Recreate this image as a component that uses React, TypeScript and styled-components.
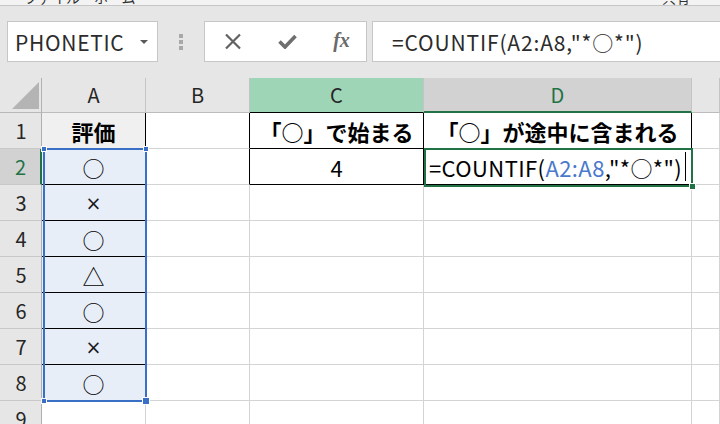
import React from 'react';
import styled, { createGlobalStyle } from 'styled-components';

const GlobalStyle = createGlobalStyle`
  html, body { margin: 0; padding: 0; background: #ffffff; }
  body { font-family: "Noto Sans CJK JP", "Noto Sans", sans-serif; }
`;

const JP = '"Noto Sans CJK JP", "Noto Sans", sans-serif';

// Shell
const Page = styled.div`
  width: 720px;
  height: 424px;
  overflow: hidden;
  display: flex;
  flex-direction: column;
  background: #e6e6e6;
`;

const TopStrip = styled.div`
  height: 5px;
  flex-shrink: 0;
  overflow: hidden;
  background: #f3f3f3;
  border-bottom: 1px solid #c6c6c6;
  display: flex;
  justify-content: space-between;
  padding: 0 30px 0 24px;
  font-family: ${JP};
  font-size: 14px;
  line-height: 14px;
  color: #333;
`;

const StripText = styled.span`
  margin-top: -10px;
`;

// Formula bar
const Toolbar = styled.div`
  height: 72px;
  flex-shrink: 0;
  box-sizing: border-box;
  display: flex;
  align-items: flex-start;
  padding: 15px 0 0 7px;
`;

const NameBox = styled.div`
  width: 151px;
  height: 41px;
  box-sizing: border-box;
  border: 1px solid #c6c6c6;
  background: #fff;
  display: flex;
  align-items: center;
  justify-content: space-between;
  padding: 0 9px 0 7px;
  font-family: ${JP};
  font-size: 21px;
  letter-spacing: 0.7px;
  color: #2b2b2b;
`;

const Caret = styled.span`
  width: 0;
  height: 0;
  border-left: 4px solid transparent;
  border-right: 4px solid transparent;
  border-top: 4px solid #5a5a5a;
`;

const Grip = styled.div`
  width: 46px;
  height: 41px;
  display: flex;
  flex-direction: column;
  align-items: center;
  justify-content: center;
  gap: 2px;
`;

const GripDot = styled.span`
  width: 4px;
  height: 4px;
  background: #a8a8a8;
`;

const FxBox = styled.div`
  width: 163px;
  height: 41px;
  box-sizing: border-box;
  border: 1px solid #c6c6c6;
  background: #fff;
  display: grid;
  grid-template-columns: 55px 55px 53px;
  align-items: center;
  justify-items: center;
`;

const FxText = styled.span`
  font-family: "Liberation Serif", serif;
  font-style: italic;
  font-weight: bold;
  font-size: 20px;
  color: #6a6a6a;
  margin-top: -3px;
`;

const FormulaInput = styled.div`
  flex: 1;
  margin-left: 5px;
  height: 41px;
  box-sizing: border-box;
  border: 1px solid #c6c6c6;
  border-right: none;
  background: #fff;
  display: flex;
  align-items: center;
  padding-left: 19px;
  font-family: ${JP};
  font-size: 21px;
  letter-spacing: 0.85px;
  color: #2b2b2b;
  white-space: nowrap;
`;

// Sheet grid
const Sheet = styled.div`
  flex: 1;
  display: grid;
  grid-template-columns: 42px 104px 104px 174px 268px 1fr;
  grid-template-rows: 35px repeat(9, 36px);
  background: #fff;
  font-family: ${JP};
`;

type Pos = { $row: number; $col: number };

const Corner = styled.div<Pos>`
  grid-row: ${p => p.$row};
  grid-column: ${p => p.$col};
  background: #e6e6e6;
  border-right: 1px solid #b0b0b0;
  border-bottom: 1px solid #b8b8b8;
  display: flex;
  align-items: flex-end;
  justify-content: flex-end;
  padding: 0 2px 3px 0;
`;

type Mark = 'none' | 'green' | 'gray';

const ColHeader = styled.div<Pos & { $mark: Mark; $under?: string }>`
  grid-row: ${p => p.$row};
  grid-column: ${p => p.$col};
  box-sizing: border-box;
  display: flex;
  align-items: center;
  justify-content: center;
  font-size: 20px;
  padding-bottom: 1px;
  background: ${p => (p.$mark === 'green' ? '#9fd5b7' : p.$mark === 'gray' ? '#d2d2d2' : '#e6e6e6')};
  color: ${p => (p.$mark === 'gray' ? '#217346' : '#262626')};
  border-right: 1px solid #c4c4c4;
  border-bottom: ${p => (p.$mark === 'gray' ? '2px solid #217346' : `1px solid ${p.$under || '#bcbcbc'}`)};
`;

const RowHeader = styled.div<Pos & { $active?: boolean }>`
  grid-row: ${p => p.$row};
  grid-column: ${p => p.$col};
  box-sizing: border-box;
  display: flex;
  align-items: center;
  justify-content: center;
  font-size: 20px;
  padding-left: 1px;
  background: ${p => (p.$active ? '#d2d2d2' : '#e6e6e6')};
  color: ${p => (p.$active ? '#217346' : '#262626')};
  border-right: ${p => (p.$active ? '2px solid #217346' : '1px solid #b0b0b0')};
  border-bottom: 1px solid #c8c8c8;
`;

const Cell = styled.div<Pos & { $bg?: string; $r?: string; $b?: string; $bold?: boolean; $left?: boolean }>`
  grid-row: ${p => p.$row};
  grid-column: ${p => p.$col};
  box-sizing: border-box;
  min-width: 0;
  overflow: hidden;
  display: flex;
  align-items: center;
  justify-content: ${p => (p.$left ? 'flex-start' : 'center')};
  padding-left: ${p => (p.$left ? '5px' : '0')};
  background: ${p => p.$bg || '#ffffff'};
  border-right: 1px solid ${p => p.$r || '#d4d4d4'};
  border-bottom: 1px solid ${p => p.$b || '#d4d4d4'};
  font-size: 22px;
  font-weight: ${p => (p.$bold ? 700 : 400)};
  letter-spacing: ${p => (p.$left ? '0.4px' : '0')};
  color: #000;
  white-space: nowrap;
`;

// the × in the sheet is the narrow Latin sign, not the full-width one
const Times = styled.span`
  font-family: "DejaVu Sans", sans-serif;
  font-size: 19px;
  color: #1a1a1a;
`;

const Ref = styled.span`
  color: #4a78cc;
`;

const TextCursor = styled.span`
  display: inline-block;
  width: 1px;
  height: 29px;
  background: #000;
  margin-left: 3px;
`;

// Selection overlays
const RangeBox = styled.div<{ $rows: string; $col: number }>`
  grid-row: ${p => p.$rows};
  grid-column: ${p => p.$col};
  margin: -1px -1px -1px 1px;
  border: 2px solid #3a6fc6;
  position: relative;
  pointer-events: none;
  z-index: 2;
`;

const ActiveBox = styled.div<Pos>`
  grid-row: ${p => p.$row};
  grid-column: ${p => p.$col};
  margin: -1px -1px -2px 0;
  border: 2px solid #217346;
  position: relative;
  pointer-events: none;
  z-index: 2;
`;

const Handle = styled.span<{ $color: string; $size: number; $corner: 'tl' | 'tr' | 'bl' | 'br' }>`
  position: absolute;
  width: ${p => p.$size}px;
  height: ${p => p.$size}px;
  background: ${p => p.$color};
  border: 1px solid #fff;
  ${p => (p.$corner[0] === 't' ? 'top' : 'bottom')}: -${p => p.$size / 2 + 2}px;
  ${p => (p.$corner[1] === 'l' ? 'left' : 'right')}: -${p => p.$size / 2 + 2}px;
`;

const CrossIcon = () => (
  <svg width="18" height="17" viewBox="0 0 18 17">
    <path d="M2 1.5 L16 15.5 M16 1.5 L2 15.5" stroke="#626262" strokeWidth="2.2" fill="none" />
  </svg>
);

const CheckIcon = () => (
  <svg width="19" height="15" viewBox="0 0 19 15">
    <path d="M1.5 7.5 L7 13 L17.5 2" stroke="#6e6e6e" strokeWidth="3.6" fill="none" />
  </svg>
);

const SelectAllMark = () => (
  <svg width="27" height="27" viewBox="0 0 27 27">
    <polygon points="27,0 27,27 0,27" fill="#b4b4b4" />
  </svg>
);

const marks = ['○', '×', '○', '△', '○', '×', '○'];

export default function App() {
  const rows = Array.from({ length: 9 }, (_, i) => i + 1);

  return (
    <Page>
      <GlobalStyle />
      <TopStrip>
        <StripText>ファイル　ホーム</StripText>
        <StripText>共有</StripText>
      </TopStrip>

      <Toolbar>
        <NameBox>
          <span>PHONETIC</span>
          <Caret />
        </NameBox>
        <Grip>
          <GripDot />
          <GripDot />
          <GripDot />
        </Grip>
        <FxBox>
          <CrossIcon />
          <CheckIcon />
          <FxText>fx</FxText>
        </FxBox>
        <FormulaInput>=COUNTIF(A2:A8,"*○*")</FormulaInput>
      </Toolbar>

      <Sheet>
        <Corner $row={1} $col={1}>
          <SelectAllMark />
        </Corner>
        <ColHeader $row={1} $col={2} $mark="none">A</ColHeader>
        <ColHeader $row={1} $col={3} $mark="none">B</ColHeader>
        <ColHeader $row={1} $col={4} $mark="green" $under="#000">C</ColHeader>
        <ColHeader $row={1} $col={5} $mark="gray">D</ColHeader>
        <ColHeader $row={1} $col={6} $mark="none" />

        {rows.map(r => (
          <RowHeader key={`h${r}`} $row={r + 1} $col={1} $active={r === 2}>{r}</RowHeader>
        ))}

        {/* row 1 */}
        <Cell $row={2} $col={2} $bg="#f0f0f0" $r="#000" $b="#000" $bold>評価</Cell>
        <Cell $row={2} $col={3} $r="#000" />
        <Cell $row={2} $col={4} $r="#000" $b="#000" $bold>「○」で始まる</Cell>
        <Cell $row={2} $col={5} $r="#000" $b="#000" $bold>「○」が途中に含まれる</Cell>
        <Cell $row={2} $col={6} />

        {/* column A marks */}
        {marks.map((m, i) => (
          <Cell key={`a${i}`} $row={i + 3} $col={2} $bg="#e8eef8" $r="#000" $b="#000">
            {m === '×' ? <Times>×</Times> : m}
          </Cell>
        ))}
        <Cell $row={10} $col={2} />

        {/* row 2 */}
        <Cell $row={3} $col={3} $r="#000" />
        <Cell $row={3} $col={4} $r="#000" $b="#000">4</Cell>
        <Cell $row={3} $col={5} $r="#000" $b="#000" $left>
          =COUNTIF(<Ref>A2:A8</Ref>,"*○*")<TextCursor />
        </Cell>
        <Cell $row={3} $col={6} />

        {/* empty rows 3-9 for B..E */}
        {rows.slice(2).map(r =>
          [3, 4, 5, 6].map(c => <Cell key={`e${r}-${c}`} $row={r + 1} $col={c} />)
        )}

        <RangeBox $rows="3 / 10" $col={2}>
          <Handle $color="#3a6fc6" $size={4} $corner="tl" />
          <Handle $color="#3a6fc6" $size={4} $corner="tr" />
          <Handle $color="#3a6fc6" $size={4} $corner="bl" />
          <Handle $color="#3a6fc6" $size={6} $corner="br" />
        </RangeBox>
        <ActiveBox $row={3} $col={5}>
          <Handle $color="#217346" $size={5} $corner="br" />
        </ActiveBox>
      </Sheet>
    </Page>
  );
}
